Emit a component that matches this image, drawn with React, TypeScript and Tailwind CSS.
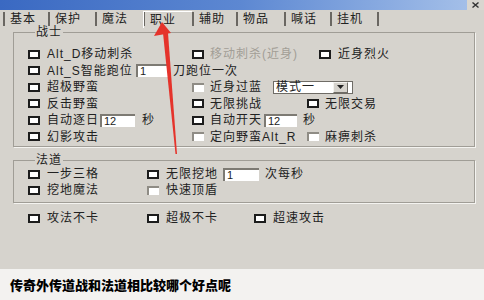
import React from "react";

const font = { fontFamily: '"Liberation Sans", "Noto Sans CJK SC", sans-serif' };

function Box({ light }: { light?: boolean }) {
  if (light) {
    return <span className="w-[12px] h-[9px] shrink-0 bg-white border-t-2 border-l-2 border-[#8f8c85]" />;
  }
  return <span className="w-[12px] h-[9px] shrink-0 bg-white border-2 border-[#1c1c1c]" />;
}

function Field({ value, className }: { value: string; className: string }) {
  return (
    <span
      className={
        "h-[13px] shrink-0 bg-white border-t-2 border-l-2 border-[#7d7a73] text-[11px] leading-[11px] pl-[2px] flex items-center tracking-normal " +
        className
      }
    >
      {value}
    </span>
  );
}

function Tab({ label, w, selected }: { label: string; w: string; selected?: boolean }) {
  return (
    <div className={"flex items-center h-full " + w}>
      <span className="w-[2px] h-[14px] bg-[#6a6762] shrink-0" />
      {selected ? (
        <div className="flex-1 self-end h-[17px] -ml-[2px] border-l border-t border-white flex items-center pl-[6px]">
          {label}
        </div>
      ) : (
        <span className="ml-[5px]">{label}</span>
      )}
    </div>
  );
}

export default function App() {
  return (
    <div
      className="relative w-[484px] h-[300px] overflow-hidden bg-[#d6d3cd] flex flex-col text-[12px] leading-[12px] tracking-[1px] text-[#222]"
      style={font}
    >
      {/* title bar */}
      <div className="h-[10px] shrink-0 bg-linear-to-r from-[#3a69c2] via-[#5d88d2] to-[#a9c3ea] flex justify-end">
        <div className="w-[17px] h-[10px] bg-[#d9d6d0] flex items-center justify-center">
          <svg width="7" height="6" viewBox="0 0 7 6">
            <path d="M0.5 0.5L6.5 5.5M6.5 0.5L0.5 5.5" stroke="#333" strokeWidth="1.4" />
          </svg>
        </div>
      </div>

      {/* tabs */}
      <div className="h-[18px] shrink-0 flex pl-[3px]">
        <Tab label="基本" w="w-[45px]" />
        <Tab label="保护" w="w-[47px]" />
        <Tab label="魔法" w="w-[48px]" />
        <Tab label="职业" w="w-[49px]" selected />
        <Tab label="辅助" w="w-[44px]" />
        <Tab label="物品" w="w-[48px]" />
        <Tab label="喊话" w="w-[46px]" />
        <Tab label="挂机" w="w-[47px]" />
        <span className="w-[2px] h-[14px] bg-[#6a6762] self-center" />
      </div>

      {/* 战士 */}
      <fieldset className="-mt-[2px] ml-[13px] mr-[9px] border border-[#a09d96] shadow-[1px_1px_0_#f4f3f0] pl-[14px] pt-[8px] pb-[1px]">
        <legend className="ml-[7px] px-[1px] leading-[12px]">战士</legend>
        <div className="flex items-center h-[16.5px]">
          <div className="w-[164px] flex items-center gap-[7px]">
            <Box />
            <span>Alt_D移动刺杀</span>
          </div>
          <div className="w-[127px] flex items-center gap-[6px]">
            <Box />
            <span className="text-[#a29e96]">移动刺杀(近身)</span>
          </div>
          <div className="flex items-center gap-[7px]">
            <Box />
            <span>近身烈火</span>
          </div>
        </div>
        <div className="flex items-center h-[16.5px]">
          <div className="flex items-center gap-[7px]">
            <Box />
            <span className="w-[89px] whitespace-nowrap">Alt_S智能跑位</span>
          </div>
          <Field value="1" className="w-[34px]" />
          <span className="ml-[3px]">刀跑位一次</span>
        </div>
        <div className="flex items-center h-[16.5px]">
          <div className="w-[164px] flex items-center gap-[7px]">
            <Box />
            <span>超极野蛮</span>
          </div>
          <div className="flex items-center gap-[6px]">
            <Box light />
            <span className="w-[63px]">近身过蓝</span>
          </div>
          <div className="w-[80px] h-[13px] bg-white border border-[#6f6c66] flex items-center">
            <span className="flex-1 pl-[2px]">模式一</span>
            <span className="w-[15px] h-[11px] mr-[4px] bg-[#d6d3cd] border border-[#f4f3f0] border-r-[#6f6c66] border-b-[#6f6c66] flex items-center justify-center">
              <svg width="7" height="4" viewBox="0 0 7 4">
                <path d="M0 0h7L3.5 4z" fill="#222" />
              </svg>
            </span>
          </div>
        </div>
        <div className="flex items-center h-[16.5px]">
          <div className="w-[164px] flex items-center gap-[7px]">
            <Box />
            <span>反击野蛮</span>
          </div>
          <div className="w-[115px] flex items-center gap-[6px]">
            <Box />
            <span>无限挑战</span>
          </div>
          <div className="flex items-center gap-[6px]">
            <Box />
            <span>无限交易</span>
          </div>
        </div>
        <div className="flex items-center h-[16.5px]">
          <div className="w-[164px] flex items-center">
            <Box />
            <span className="ml-[7px] w-[53px]">自动逐日</span>
            <Field value="12" className="w-[35px]" />
            <span className="ml-[7px]">秒</span>
          </div>
          <div className="flex items-center">
            <Box />
            <span className="ml-[6px] w-[54px]">自动开天</span>
            <Field value="12" className="w-[33px]" />
            <span className="ml-[6px]">秒</span>
          </div>
        </div>
        <div className="flex items-center h-[16.5px]">
          <div className="w-[164px] flex items-center gap-[7px]">
            <Box />
            <span>幻影攻击</span>
          </div>
          <div className="w-[115px] flex items-center gap-[6px]">
            <Box light />
            <span className="whitespace-nowrap">定向野蛮Alt_R</span>
          </div>
          <div className="flex items-center gap-[6px]">
            <Box light />
            <span>麻痹刺杀</span>
          </div>
        </div>
      </fieldset>

      {/* 法道 */}
      <fieldset className="mt-[7px] ml-[13px] mr-[9px] border border-[#a09d96] shadow-[1px_1px_0_#f4f3f0] pl-[14px] pb-[4px]">
        <legend className="ml-[7px] px-[1px] leading-[12px]">法道</legend>
        <div className="flex items-center h-[16px]">
          <div className="w-[119px] flex items-center gap-[7px]">
            <Box />
            <span>一步三格</span>
          </div>
          <div className="flex items-center">
            <Box />
            <span className="ml-[7px] w-[57px]">无限挖地</span>
            <Field value="1" className="w-[36px]" />
            <span className="ml-[6px]">次每秒</span>
          </div>
        </div>
        <div className="flex items-center h-[16px]">
          <div className="w-[119px] flex items-center gap-[7px]">
            <Box />
            <span>挖地魔法</span>
          </div>
          <div className="flex items-center gap-[7px]">
            <Box light />
            <span>快速顶盾</span>
          </div>
        </div>
      </fieldset>

      {/* bottom options */}
      <div className="mt-[7px] h-[16px] pl-[28px] flex items-center">
        <div className="w-[119px] flex items-center gap-[7px]">
          <Box />
          <span>攻法不卡</span>
        </div>
        <div className="w-[107px] flex items-center gap-[7px]">
          <Box />
          <span>超极不卡</span>
        </div>
        <div className="flex items-center gap-[7px]">
          <Box />
          <span>超速攻击</span>
        </div>
      </div>

      <div className="flex-1" />

      {/* caption */}
      <div className="h-[31px] shrink-0 bg-[#f3f2f0] pl-[10px] pt-[2px] flex items-center">
        <span className="text-[13px] leading-[13px] font-black tracking-normal text-black">
          传奇外传道战和法道相比较哪个好点呢
        </span>
      </div>

      {/* red arrow drawn over the screenshot */}
      <svg className="absolute inset-0 pointer-events-none" width="484" height="300" viewBox="0 0 484 300">
        <path d="M162 22L154 36L171 33Z" fill="#e5332b" />
        <path d="M163 33L168 33L177 154L175.5 154Z" fill="#e5332b" />
      </svg>
    </div>
  );
}
